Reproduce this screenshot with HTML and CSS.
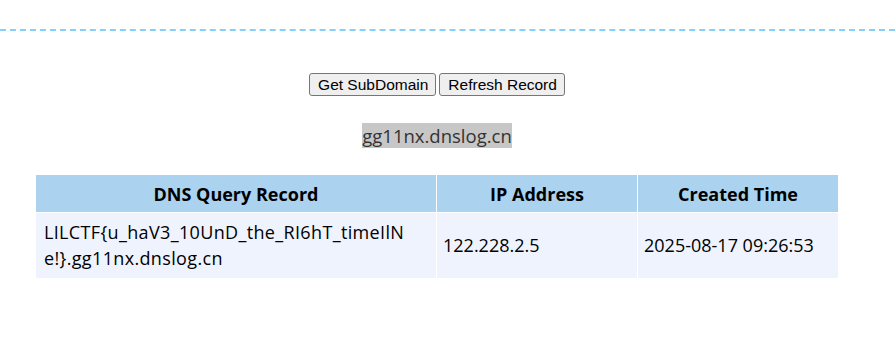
FILE: index.html
```html
<!DOCTYPE html>
<html>
<head>
<meta charset="utf-8">
<link rel="stylesheet" href="styles.css">
</head>
<body>
<div class="divider"></div>
<main class="page">
  <div class="actions">
    <button class="btn">Get SubDomain</button>
    <button class="btn">Refresh Record</button>
  </div>
  <div class="domain-wrap"><span class="domain">gg11nx.dnslog.cn</span></div>
  <table class="records">
    <thead>
      <tr>
        <th class="col-query">DNS Query Record</th>
        <th class="col-ip">IP Address</th>
        <th class="col-time">Created Time</th>
      </tr>
    </thead>
    <tbody>
      <tr>
        <td class="cell-query">LILCTF{u_haV3_10UnD_the_RI6hT_timeIlNe!}.gg11nx.dnslog.cn</td>
        <td>122.228.2.5</td>
        <td>2025-08-17 09:26:53</td>
      </tr>
    </tbody>
  </table>
</main>
</body>
</html>
```

FILE: styles.css
```css
html, body {
  margin: 0;
  padding: 0;
  background: #ffffff;
}
body {
  font-family: "Open Sans", "Liberation Sans", sans-serif;
  color: #000;
}
.divider {
  margin-top: 29px;
  border-top: 2px dashed #87cefa;
}
.page {
  width: 874px;
  display: flex;
  flex-direction: column;
  align-items: center;
}
.actions {
  margin-top: 42px;
  display: flex;
  gap: 3px;
}
.btn {
  font-family: "Liberation Sans", Arial, sans-serif;
  font-size: 15.5px;
  line-height: 17px;
  padding: 2px 7px 2px 8px;
  background: #efefef;
  border: 1px solid #767676;
  border-radius: 3px;
  color: #000;
}
.domain-wrap {
  margin-top: 27px;
}
.domain {
  display: inline-block;
  background: #c7c7c7;
  color: #333;
  font-size: 18.5px;
  line-height: 25px;
}
.records {
  margin-top: 26px;
  width: 803px;
  border-collapse: collapse;
  table-layout: fixed;
  font-size: 18px;
  line-height: 26px;
}
.records th,
.records td {
  box-sizing: border-box;
  border: 1px solid #fff;
}
.records th {
  background: #abd2ee;
  font-weight: 700;
  padding: 6px 8px 5px;
  text-align: center;
}
.records td {
  background: #eef3fd;
  padding: 6px 8px 7px 6px;
  text-align: left;
}
.records td.cell-query {
  word-break: break-all;
  letter-spacing: 0.35px;
  padding-left: 8px;
  padding-right: 12px;
}
.col-query { width: 401px; }
.col-ip { width: 201px; }
.col-time { width: 201px; }
```
